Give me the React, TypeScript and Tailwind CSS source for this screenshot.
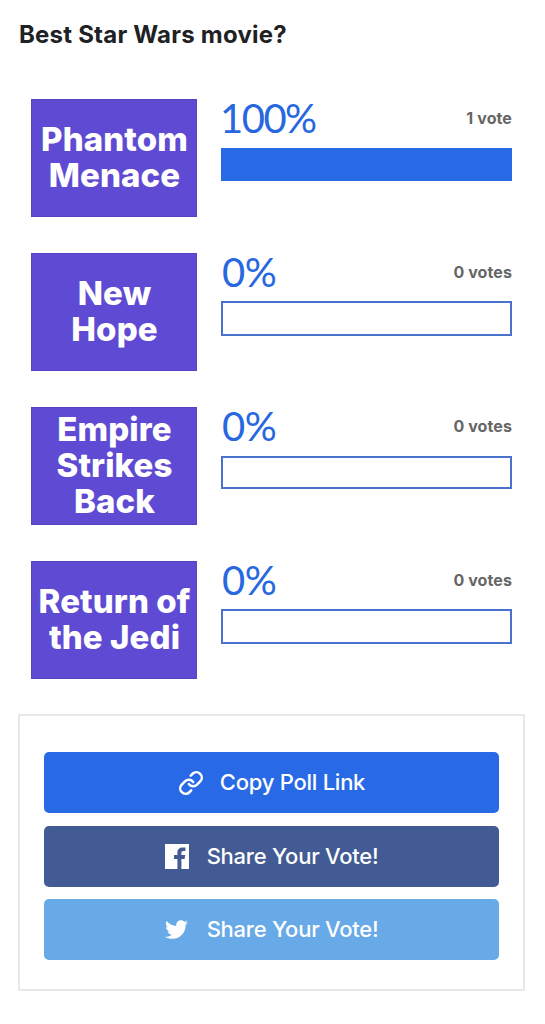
import clsx from 'clsx'
import { Link } from 'lucide-react'
import { FaTwitter } from 'react-icons/fa'

type Option = {
  lines: string[]
  percent: number
  votes: number
  barClass: string
}

const options: Option[] = [
  {
    lines: ['Phantom', 'Menace'],
    percent: 100,
    votes: 1,
    barClass: 'mt-[49px] h-[33px]',
  },
  {
    lines: ['New', 'Hope'],
    percent: 0,
    votes: 0,
    barClass: 'mt-[48px] h-[35px]',
  },
  {
    lines: ['Empire', 'Strikes', 'Back'],
    percent: 0,
    votes: 0,
    barClass: 'mt-[49px] h-[33px]',
  },
  {
    lines: ['Return of', 'the Jedi'],
    percent: 0,
    votes: 0,
    barClass: 'mt-[48px] h-[35px]',
  },
]

const FacebookIcon = () => (
  <svg className="h-[25px] w-[24px]" viewBox="0 0 24 25" fill="currentColor">
    <path d="M0 0H24V25H16.4V15H19.6L20.2 11H16.4V9C16.4 7.7 16.9 7 18.3 7H20.4V3.6C19.7 3.5 18.8 3.4 17.8 3.4C14.6 3.4 12.4 5.2 12.4 8.4V11H9V15H12.4V25H0Z" />
  </svg>
)

const PollRow = ({ option }: { option: Option }) => (
  <div className="flex h-[118px] gap-x-6">
    <div className="flex w-[166px] flex-col items-center justify-center border border-[#5546c0] bg-[#5f4bd3] pb-[3px] pl-px text-[33px] leading-[36px] font-extrabold text-white">
      {option.lines.map((line) => (
        <p key={line} className="tracking-[0.1px] whitespace-nowrap">
          {line}
        </p>
      ))}
    </div>
    <div className="flex-1">
      <div className="flex h-0 items-start justify-between">
        <p
          className={clsx(
            'font-[Lato,sans-serif] text-[40px] leading-[38px] text-[#2767e0]',
            option.percent === 100
              ? '-ml-px tracking-[-1.5px]'
              : 'ml-px tracking-[-0.4px]'
          )}
        >
          {option.percent}%
        </p>
        <p className="pt-[7px] text-[16px] leading-6 font-bold tracking-[0.1px] text-[#666]">
          {option.votes} {option.votes === 1 ? 'vote' : 'votes'}
        </p>
      </div>
      <div
        className={clsx(
          'border-2',
          option.barClass,
          option.percent === 100
            ? 'border-[#2869e6] bg-[#2869e6]'
            : 'border-[#4a73d0]'
        )}
      />
    </div>
  </div>
)

const App = () => (
  <main className="h-[1024px] w-[545px] bg-white pt-[20px] font-[Inter,sans-serif]">
    <h1 className="pl-[19px] text-[24px] leading-[30px] font-bold tracking-[0.22px] text-[#202124]">
      Best Star Wars movie?
    </h1>
    <section className="mt-[49px] flex flex-col gap-y-9 pr-[33px] pl-[31px]">
      {options.map((option) => (
        <PollRow key={option.lines[0]} option={option} />
      ))}
    </section>
    <section className="mt-[35px] ml-[18px] flex h-[277px] w-[507px] flex-col gap-y-3 border-2 border-[#e8e8e8] px-6 pt-[36px] text-[22px] font-medium tracking-[-0.25px] text-white">
      <button className="mb-px flex h-[61px] shrink-0 items-center justify-center rounded-[5px] bg-[#2869e6]">
        <Link className="h-[26px] w-[26px]" strokeWidth={2.3} />
        <span className="ml-4">Copy Poll Link</span>
      </button>
      <button className="flex h-[61px] shrink-0 items-center justify-center rounded-[5px] bg-[#425b94]">
        <FacebookIcon />
        <span className="ml-[18px]">Share Your Vote!</span>
      </button>
      <button className="flex h-[61px] shrink-0 items-center justify-center rounded-[5px] bg-[#68a9e7]">
        <FaTwitter className="h-[23px] w-[23px]" />
        <span className="ml-[19px]">Share Your Vote!</span>
      </button>
    </section>
  </main>
)

export default App
